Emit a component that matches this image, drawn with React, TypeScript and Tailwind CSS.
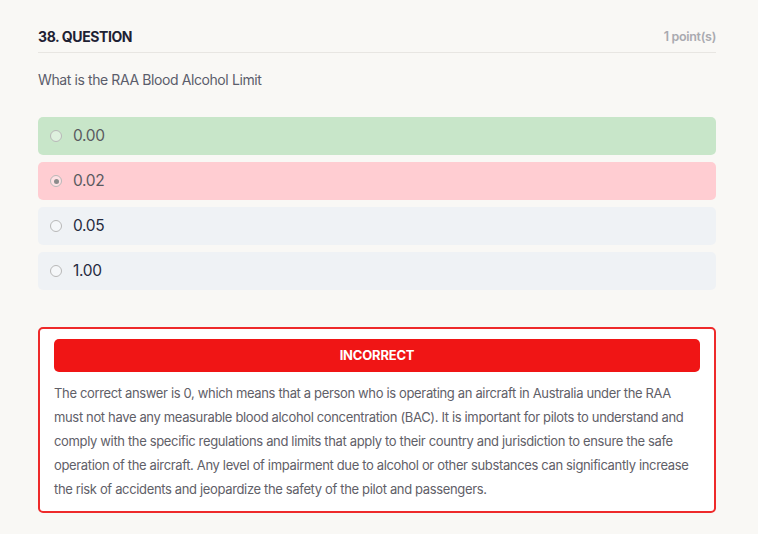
import React from 'react';

// ─── Data ────────────────────────────────────────────────────────────────────

const options = [
  { label: '0.00', state: 'correct' },
  { label: '0.02', state: 'wrong' },
  { label: '0.05', state: 'idle' },
  { label: '1.00', state: 'idle' },
] as const;

const explanation =
  'The correct answer is 0, which means that a person who is operating an aircraft in Australia under the RAA must not have any measurable blood alcohol concentration (BAC). It is important for pilots to understand and comply with the specific regulations and limits that apply to their country and jurisdiction to ensure the safe operation of the aircraft. Any level of impairment due to alcohol or other substances can significantly increase the risk of accidents and jeopardize the safety of the pilot and passengers.';

// ─── Option Row ──────────────────────────────────────────────────────────────

function OptionRow({ label, state }: { label: string; state: 'correct' | 'wrong' | 'idle' }) {
  const bg =
    state === 'correct' ? 'bg-[#c8e6c9]' : state === 'wrong' ? 'bg-[#ffcdd2]' : 'bg-[#eff2f5]';
  const text = state === 'idle' ? 'text-[#262b3f]' : 'text-[#5a5a5f]';

  return (
    <div className={`flex items-center h-[38px] rounded-[5px] px-[12px] ${bg}`}>
      <span className="flex items-center justify-center w-[12px] h-[12px] rounded-full border border-[#b8b8b8] bg-white/40">
        {state === 'wrong' && <span className="w-[5px] h-[5px] rounded-full bg-[#8c8c8c]" />}
      </span>
      <span className={`ml-[11px] text-[15.5px] tracking-[-0.3px] ${text}`}>{label}</span>
    </div>
  );
}

// ─── App ─────────────────────────────────────────────────────────────────────

export default function App() {
  return (
    <div
      className="min-h-[534px] w-full bg-[#f9f8f5] pl-[38px] pr-[42px] pt-[28px]"
      style={{ fontFamily: 'Inter, "Noto Sans", sans-serif' }}
    >
      {/* Header */}
      <div className="flex items-end justify-between border-b border-[#e8e6e2] pb-[6px]">
        <h2 className="text-[14px] font-bold tracking-[-0.4px] text-[#1e2133] leading-[18px]">
          38. QUESTION
        </h2>
        <span className="text-[12.5px] font-semibold tracking-[-0.3px] text-[#a9aab0] leading-[18px]">
          1 point(s)
        </span>
      </div>

      <p className="mt-[17px] text-[14px] tracking-[-0.4px] text-[#5b5d6b] leading-[20px]">
        What is the RAA Blood Alcohol Limit
      </p>

      {/* Options */}
      <div className="mt-[27px] flex flex-col gap-[7px]">
        {options.map((o) => (
          <OptionRow key={o.label} label={o.label} state={o.state} />
        ))}
      </div>

      {/* Feedback */}
      <div className="mt-[37px] rounded-[5px] border-2 border-[#ee2a2a] bg-white px-[14px] pt-[10px] pb-[10px]">
        <div className="flex items-center justify-center h-[33px] rounded-[5px] bg-[#f01515]">
          <span className="text-[13px] font-bold text-white tracking-[-0.2px]">INCORRECT</span>
        </div>
        <p className="mt-[9px] text-[13px] leading-[24px] text-[#5f6068] tracking-[-0.35px]">
          {explanation}
        </p>
      </div>
    </div>
  );
}
